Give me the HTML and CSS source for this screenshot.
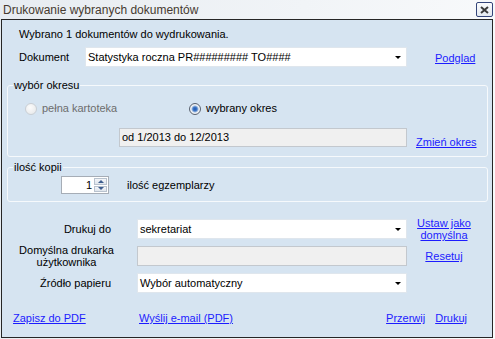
FILE: index.html
```html
<!DOCTYPE html>
<html lang="pl">

<head>
    <meta charset="UTF-8">
    <meta name="viewport" content="width=device-width, initial-scale=1.0">
    <title>Drukowanie wybranych dokumentów</title>
    <link rel="stylesheet" href="styles.css">
</head>

<body>
    <div class="window">
        <div class="titlebar">
            <span class="title">Drukowanie wybranych dokumentów</span>
            <span class="close-btn">
                <svg width="9" height="8" viewBox="0 0 9 8">
                    <path d="M1 1 L8 7 M8 1 L1 7" stroke="#3a3a3a" stroke-width="2" fill="none" />
                </svg>
            </span>
        </div>

        <div class="panel">
            <div class="info">Wybrano 1 dokumentów do wydrukowania.</div>

            <div class="doc-row">
                <span class="doc-label">Dokument</span>
                <div class="combo doc-combo">
                    <span>Statystyka roczna PR######### TO####</span>
                    <span class="arrow"></span>
                </div>
                <a class="link podglad" href="#">Podglad</a>
            </div>

            <!-- wybor okresu -->
            <fieldset class="group period">
                <legend>wybór okresu</legend>
                <div class="radios">
                    <label class="radio disabled"><span class="dot"></span>pełna kartoteka</label>
                    <label class="radio checked"><span class="dot"></span>wybrany okres</label>
                </div>
                <div class="range-row">
                    <div class="textbox disabled-box">od 1/2013 do 12/2013</div>
                    <a class="link change" href="#">Zmień okres</a>
                </div>
            </fieldset>

            <!-- ilosc kopii -->
            <fieldset class="group copies">
                <legend>ilość kopii</legend>
                <div class="copies-row">
                    <div class="spinner">
                        <span class="spin-value">1</span>
                        <span class="spin-btns">
                            <span class="spin-btn"><span class="tri up"></span></span>
                            <span class="spin-btn"><span class="tri down"></span></span>
                        </span>
                    </div>
                    <span class="copies-label">ilość egzemplarzy</span>
                </div>
            </fieldset>

            <div class="printer-grid">
                <span class="field-label">Drukuj do</span>
                <div class="combo">
                    <span>sekretariat</span>
                    <span class="arrow"></span>
                </div>
                <a class="link side-link" href="#">Ustaw jako<br>domyślna</a>

                <span class="field-label two-line">Domyślna drukarka<br>użytkownika</span>
                <div class="textbox disabled-box"></div>
                <a class="link side-link" href="#">Resetuj</a>

                <span class="field-label">Źródło papieru</span>
                <div class="combo">
                    <span>Wybór automatyczny</span>
                    <span class="arrow"></span>
                </div>
                <span></span>
            </div>

            <div class="footer">
                <a class="link pdf" href="#">Zapisz do PDF</a>
                <a class="link" href="#">Wyślij e-mail (PDF)</a>
                <a class="link cancel" href="#">Przerwij</a>
                <a class="link" href="#">Drukuj</a>
            </div>
        </div>
    </div>
</body>

</html>
```

FILE: styles.css
```css
* {
    margin: 0;
    padding: 0;
    box-sizing: border-box;
}

body {
    font-family: "Liberation Sans", Arial, sans-serif;
    font-size: 11px;
    line-height: 13px;
    color: #000;
    background: #f4f6f9;
}

.window {
    width: 495px;
    height: 339px;
    display: flex;
    flex-direction: column;
    background: linear-gradient(100deg, #e7ecf1 0%, #f1f4f7 55%, #fafbfc 100%);
}

/* pasek tytulu */
.titlebar {
    height: 19px;
    display: flex;
    align-items: center;
    justify-content: space-between;
    padding: 0 2px 0 3px;
}

.title {
    font-size: 12px;
    color: #463a30;
    line-height: 16px;
}

.close-btn {
    width: 17px;
    height: 15px;
    border: 1px solid #34457a;
    border-radius: 2px;
    background: linear-gradient(#fbfcfd, #e4e9f0);
    display: flex;
    align-items: center;
    justify-content: center;
}

.panel {
    height: 319px;
    margin: 0 2px 1px 1px;
    border: 1px solid #262626;
    background: #d6e4f1;
    padding: 0 4px 0 5px;
}

.info {
    margin-top: 8px;
    padding-left: 12px;
}

.doc-row {
    display: flex;
    align-items: center;
    margin-top: 6px;
    padding-left: 12px;
}

.doc-label {
    width: 66px;
}

.combo {
    height: 20px;
    background: #fff;
    border: 1px solid #dfe6ed;
    display: flex;
    align-items: center;
    justify-content: space-between;
    padding: 0 5px 0 2px;
}

.doc-combo {
    width: 322px;
}

.arrow {
    width: 0;
    height: 0;
    border-left: 3px solid transparent;
    border-right: 3px solid transparent;
    border-top: 3px solid #000;
}

.link {
    color: #1c1cff;
    text-decoration: underline;
}

.podglad {
    margin-left: 28px;
    margin-top: 2px;
}

/* grupy */
.group {
    border: 1px solid #f6f9fc;
    border-radius: 3px;
    min-width: 0;
}

.group legend {
    margin-left: 5px;
    padding: 0 1px;
    line-height: 14px;
}

.period {
    margin-top: 11px;
    padding-bottom: 9px;
}

.radios {
    display: flex;
    margin-top: 10px;
    padding-left: 17px;
}

.radio {
    display: flex;
    align-items: center;
}

.radio.disabled {
    width: 164px;
    color: #6d6d6d;
}

.radio .dot {
    width: 12px;
    height: 12px;
    border-radius: 50%;
    margin-right: 5px;
}

.radio.disabled .dot {
    border: 1px solid #c9ced4;
    background: radial-gradient(circle at 40% 35%, #fbfbfb, #e4e6e8);
}

.radio.checked .dot {
    border: 1px solid #5a6270;
    background: radial-gradient(circle, #1f56b0 0, #3f78c8 2px, #9ab6dc 3px, #f4f6f8 4px, #dfe3e8 6px);
}

.range-row {
    display: flex;
    margin-top: 13px;
}

.textbox {
    height: 19px;
    border: 1px solid #c3c8ce;
    padding: 0 2px;
    display: flex;
    align-items: center;
}

.disabled-box {
    background: #f0f0f0;
}

.range-row .textbox {
    width: 288px;
    margin-left: 111px;
}

.change {
    align-self: flex-end;
    margin-left: 9px;
    margin-bottom: -2px;
}

.copies {
    margin-top: 3px;
    padding-bottom: 7px;
}

.copies-row {
    display: flex;
    align-items: center;
    margin-top: 2px;
    padding-left: 53px;
}

.spinner {
    width: 48px;
    height: 18px;
    border: 1px solid #a6adb6;
    background: #fff;
    display: flex;
    padding: 1px;
}

.spin-value {
    flex: 1;
    text-align: right;
    padding-right: 2px;
    line-height: 14px;
}

.spin-btns {
    width: 13px;
    display: flex;
    flex-direction: column;
    gap: 1px;
}

.spin-btn {
    flex: 1;
    background: linear-gradient(#f4f6f9, #dfe5ec);
    border: 1px solid #b8c2ce;
    display: flex;
    align-items: center;
    justify-content: center;
}

.tri {
    width: 0;
    height: 0;
    border-left: 3px solid transparent;
    border-right: 3px solid transparent;
}

.tri.up {
    border-bottom: 3px solid #3d5d8e;
}

.tri.down {
    border-top: 3px solid #3d5d8e;
}

.copies-label {
    margin-left: 18px;
}

/* drukarka */
.printer-grid {
    display: grid;
    grid-template-columns: 119px 270px 74px;
    grid-template-rows: 20px 20px 20px;
    row-gap: 7px;
    align-items: center;
    margin-top: 17px;
    padding-left: 11px;
}

.printer-grid .combo,
.printer-grid .textbox {
    height: 20px;
}

.field-label {
    text-align: right;
    padding-right: 26px;
}

.field-label.two-line {
    text-align: center;
    padding-right: 22px;
    line-height: 12px;
}

.side-link {
    text-align: center;
    line-height: 12px;
}

.footer {
    display: flex;
    margin-top: 19px;
    padding: 0 21px 0 6px;
}

.pdf {
    width: 126px;
}

.cancel {
    margin-left: auto;
    margin-right: 10px;
}
```
